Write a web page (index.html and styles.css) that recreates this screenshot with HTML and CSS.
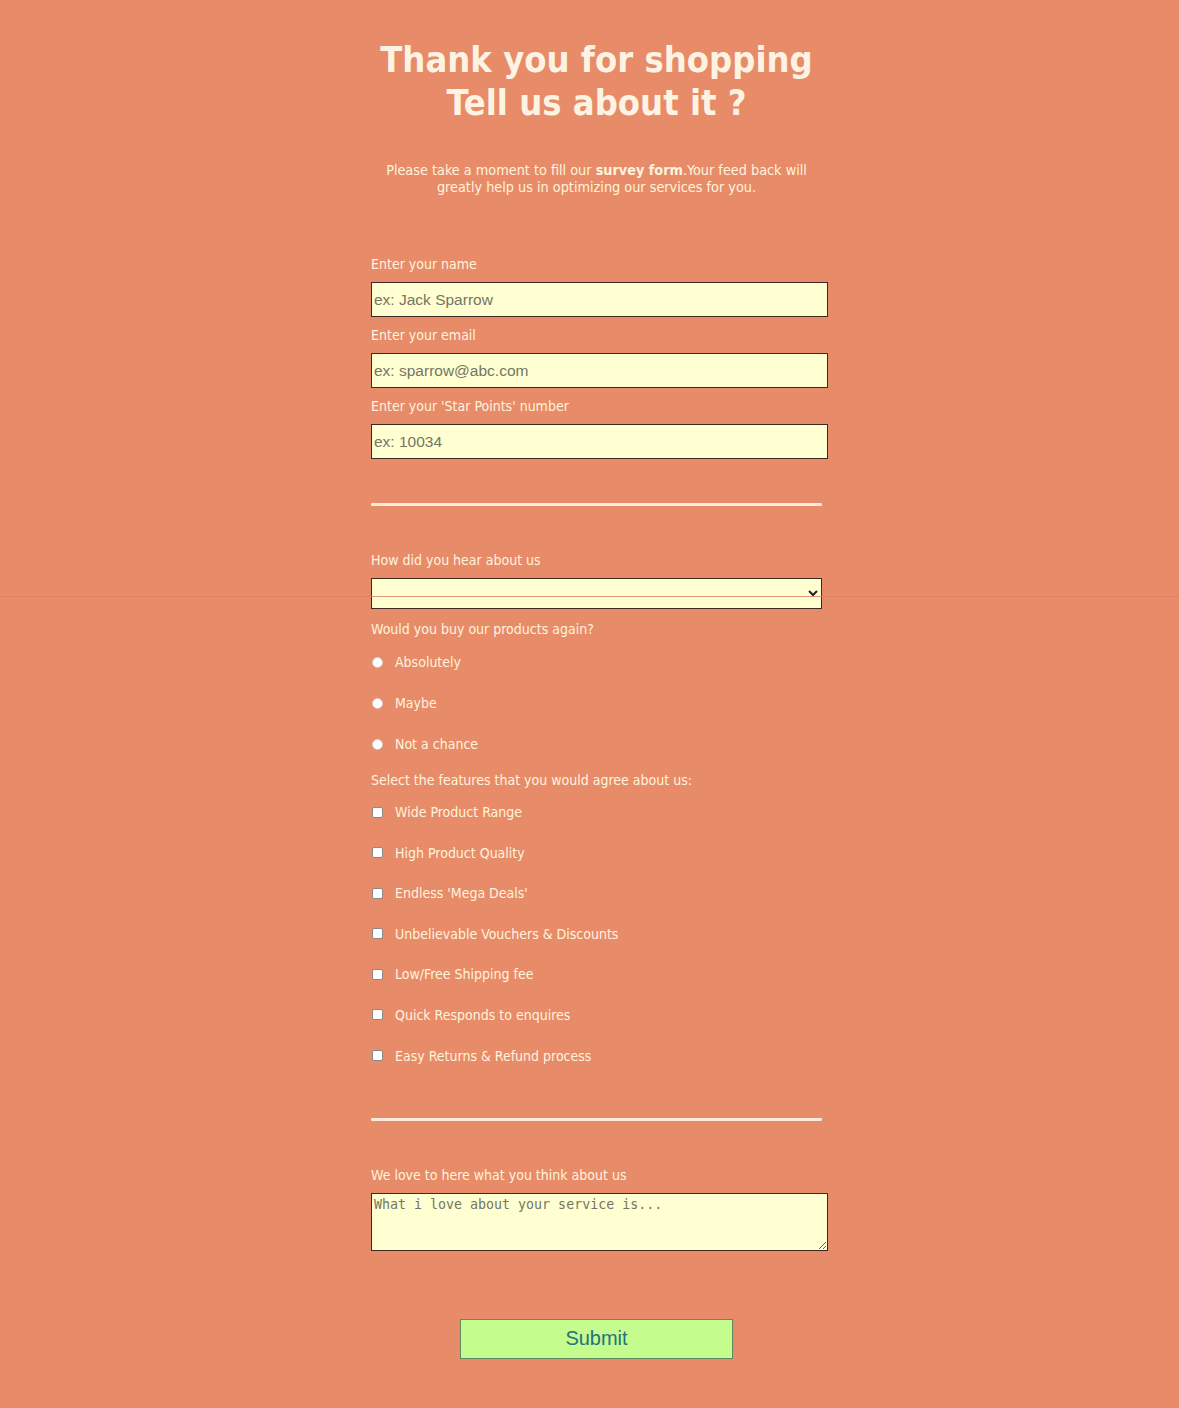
FILE: index.html
```html
<!DOCTYPE html>
<html lang="en">
<head>
<meta charset="utf-8">
<title>Survey Form</title>
<link rel="stylesheet" href="styles.css">
</head>
<body>
<div class="seam"></div>
<header class="header">
  <h1 class="title">Thank you for shopping<br>Tell us about it ?</h1>
  <p class="intro">Please take a moment to fill our <b>survey form</b>.Your feed back will<br>greatly help us in optimizing our services for you.</p>
</header>
<form class="form">
  <label class="label" for="name">Enter your name</label>
  <input class="field" id="name" type="text" placeholder="ex: Jack Sparrow">
  <label class="label" for="email">Enter your email</label>
  <input class="field" id="email" type="email" placeholder="ex: sparrow@abc.com">
  <label class="label" for="num">Enter your 'Star Points' number</label>
  <input class="field" id="num" type="text" placeholder="ex: 10034">

  <div class="rule rule-top"></div>

  <label class="label label-hear" for="hear">How did you hear about us</label>
  <select class="select" id="hear"><option></option></select>

  <p class="label label-q">Would you buy our products again?</p>
  <div class="choices">
    <label class="choice"><span class="radio"></span>Absolutely</label>
    <label class="choice"><span class="radio"></span>Maybe</label>
    <label class="choice"><span class="radio"></span>Not a chance</label>
  </div>

  <p class="label label-q2">Select the features that you would agree about us:</p>
  <div class="choices checks">
    <label class="choice"><span class="check"></span>Wide Product Range</label>
    <label class="choice"><span class="check"></span>High Product Quality</label>
    <label class="choice"><span class="check"></span>Endless 'Mega Deals'</label>
    <label class="choice"><span class="check"></span>Unbelievable Vouchers &amp; Discounts</label>
    <label class="choice"><span class="check"></span>Low/Free Shipping fee</label>
    <label class="choice"><span class="check"></span>Quick Responds to enquires</label>
    <label class="choice"><span class="check"></span>Easy Returns &amp; Refund process</label>
  </div>

  <div class="rule rule-bottom"></div>

  <label class="label label-love" for="msg">We love to here what you think about us</label>
  <textarea class="textarea" id="msg" placeholder="What i love about your service is..."></textarea>

  <div class="submit-row"><button class="submit" type="button">Submit</button></div>
</form>
</body>
</html>
```
FILE: styles.css
```css
* { box-sizing: border-box; }
html, body { margin: 0; }
body {
  background: #e88b68;
  padding-left: 14px;
  font-family: "DejaVu Sans Condensed", "DejaVu Sans", sans-serif;
  color: #fff4de;
  min-height: 1408px;
  position: relative;
}
.seam {
  position: absolute;
  left: 0;
  right: 0;
  top: 596px;
  height: 1px;
  background: #d97f5e;
  z-index: 2;
  opacity: 0.8;
}
.header { text-align: center; padding-top: 38px; }
.title {
  margin: 0;
  font-size: 36px;
  line-height: 43px;
  font-weight: bold;
  color: #fcf3e3;
}
.intro {
  margin: 38px 0 0;
  font-size: 14.3px;
  line-height: 17px;
}
.intro b { font-weight: bold; }
.form {
  width: 457px;
  margin: 59px auto 0;
  position: relative;
  left: 3px;
  display: flex;
  flex-direction: column;
}
.label {
  display: block;
  margin: 0;
  font-size: 14px;
  line-height: 18px;
  padding: 0 0 9px;
}
.field {
  width: 457px;
  height: 35px;
  margin: 0 0 9px;
  border: 1px solid #3a2a22;
  background: #ffffd1;
  font-family: "Liberation Sans", Arial, sans-serif;
  font-size: 15.5px;
  padding: 0 2px;
  color: #333;
}
.field::placeholder { color: #757565; }
.rule {
  width: 451px;
  height: 3px;
  background: #fcecd9;
  border-radius: 1px;
}
.rule-top { margin: 35px 0 45px; }
.select {
  width: 451px;
  height: 31px;
  border: 1px solid #3a2a22;
  background: #ffffd1;
  margin: 0 0 11px;
  color: #222;
}
.choices { display: flex; flex-direction: column; gap: 23px; margin: 0 0 18px; padding-top: 9px; }
.checks { gap: 22.6px; }
.choice {
  display: flex;
  align-items: center;
  font-size: 14px;
  line-height: 18px;
  height: 18px;
}
.radio {
  width: 11px;
  height: 11px;
  border-radius: 50%;
  background: #fff;
  border: 1px solid #d8ccc6;
  margin: 0 12px 0 1px;
  flex: none;
}
.check {
  width: 11px;
  height: 11px;
  border-radius: 2px;
  background: #fff;
  border: 1px solid #8a8a8a;
  margin: 0 12px 0 1px;
  flex: none;
}
.label-q { padding-bottom: 6px; }
.label-q2 { padding-bottom: 5px; }
.rule-bottom { margin: 35px 0 45px; }
.textarea {
  width: 457px;
  height: 58px;
  border: 1px solid #3a2a22;
  background: #ffffd1;
  font-family: "DejaVu Sans Mono", "Liberation Mono", monospace;
  font-size: 13.3px;
  padding: 3px 2px;
  resize: vertical;
  margin: 0;
}
.textarea::placeholder { color: #757565; }
.submit-row { display: flex; justify-content: center; padding-top: 68px; padding-right: 6px; }
.submit {
  width: 273px;
  height: 40px;
  background: #c4fc8e;
  border: 1px solid #5f8a62;
  color: #24727a;
  font-family: "Liberation Sans", Arial, sans-serif;
  font-size: 20px;
  padding: 0;
}
```
